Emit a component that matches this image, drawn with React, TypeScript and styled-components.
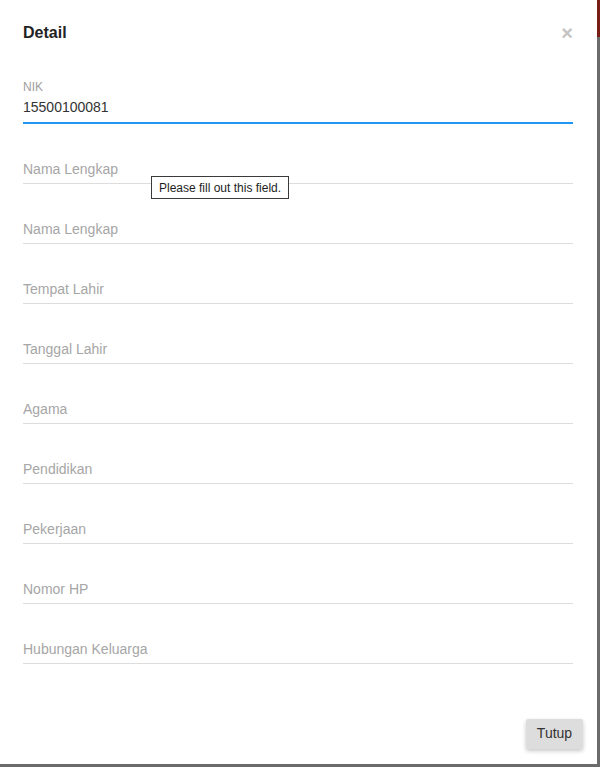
import React from "react";
import styled, { createGlobalStyle } from "styled-components";

const GlobalStyle = createGlobalStyle`
  html, body {
    margin: 0;
    padding: 0;
    background: #6b6b6b;
  }
  * {
    box-sizing: border-box;
  }
`;

const StScreen = styled.div`
  display: flex;
  width: 600px;
  height: 767px;
  background: #6b6b6b;
  overflow: hidden;
`;

const StModal = styled.div`
  display: flex;
  flex-direction: column;
  width: 597px;
  height: 764px;
  background: #ffffff;
  font-family: "Liberation Sans", Arial, sans-serif;
`;

const StBackdropSide = styled.div`
  flex: 1;
  display: flex;
  flex-direction: column;
`;

const StNavUnderlay = styled.div`
  height: 37px;
  background: #7a1d15;
`;

const StContent = styled.div`
  flex: 1;
  padding: 21px 24px 0 23px;
`;

const StHeader = styled.div`
  display: flex;
  justify-content: space-between;
  align-items: center;
`;

const StTitle = styled.h4`
  margin: 0;
  font-size: 16px;
  line-height: 24px;
  font-weight: 700;
  color: #222;
`;

const StClose = styled.span`
  font-size: 20px;
  line-height: 20px;
  font-weight: 700;
  color: #c4c4c4;
  cursor: pointer;
`;

const StForm = styled.form`
  display: flex;
  flex-direction: column;
  margin-top: 35px;
`;

const StField = styled.div<{ $gap: number }>`
  position: relative;
  margin-top: ${(props) => props.$gap}px;
`;

const StLabel = styled.label`
  display: block;
  font-size: 12px;
  line-height: 14px;
  color: #9e9e9e;
  margin-bottom: 4px;
`;

const StInput = styled.input<{ $active?: boolean }>`
  display: block;
  width: 100%;
  height: 25px;
  padding: 0 0 ${(props) => (props.$active ? 6 : 4)}px;
  margin: 0;
  border: none;
  border-bottom: 1px solid ${(props) => (props.$active ? "#2196f3" : "#dddddd")};
  box-shadow: ${(props) => (props.$active ? "0 1px 0 0 #2196f3" : "none")};
  font-family: "Liberation Sans", Arial, sans-serif;
  font-size: 14px;
  color: #333;
  background: transparent;
  outline: none;

  &::placeholder {
    color: #a6a6a6;
  }
`;

const StTooltip = styled.div`
  position: absolute;
  left: 128px;
  top: 17px;
  width: 138px;
  height: 23px;
  padding: 0 0 0 7px;
  border: 1px solid #3a3a3a;
  background: #ffffff;
  font-family: "Liberation Sans", Arial, sans-serif;
  font-size: 12px;
  line-height: 22px;
  color: #1e1e1e;
  white-space: nowrap;
`;

const StFooter = styled.div`
  display: flex;
  justify-content: flex-end;
  padding: 0 14px 15px 0;
`;

const StFlatButton = styled.button`
  height: 30px;
  width: 57px;
  padding: 0 0 2px;
  border: none;
  border-radius: 2px;
  background: #dddddd;
  box-shadow: 0 2px 4px rgba(0, 0, 0, 0.22);
  font-family: "Liberation Sans", Arial, sans-serif;
  font-size: 14px;
  color: #333;
  cursor: pointer;
`;

const emptyFields = [
  "Nama Lengkap",
  "Tempat Lahir",
  "Tanggal Lahir",
  "Agama",
  "Pendidikan",
  "Pekerjaan",
  "Nomor HP",
  "Hubungan Keluarga",
];

export default function App() {
  return (
    <>
      <GlobalStyle />
      <StScreen>
        <StModal>
          <StContent>
            <StHeader>
              <StTitle>Detail</StTitle>
              <StClose>×</StClose>
            </StHeader>
            <StForm onSubmit={(e) => e.preventDefault()}>
              <StField $gap={0}>
                <StLabel>NIK</StLabel>
                <StInput $active defaultValue="15500100081" />
              </StField>
              <StField $gap={36}>
                <StInput placeholder="Nama Lengkap" required />
                <StTooltip>Please fill out this field.</StTooltip>
              </StField>
              {emptyFields.map((name, i) => (
                <StField key={name + i} $gap={35}>
                  <StInput placeholder={name} />
                </StField>
              ))}
            </StForm>
          </StContent>
          <StFooter>
            <StFlatButton type="button">Tutup</StFlatButton>
          </StFooter>
        </StModal>
        <StBackdropSide>
          <StNavUnderlay />
        </StBackdropSide>
      </StScreen>
    </>
  );
}
